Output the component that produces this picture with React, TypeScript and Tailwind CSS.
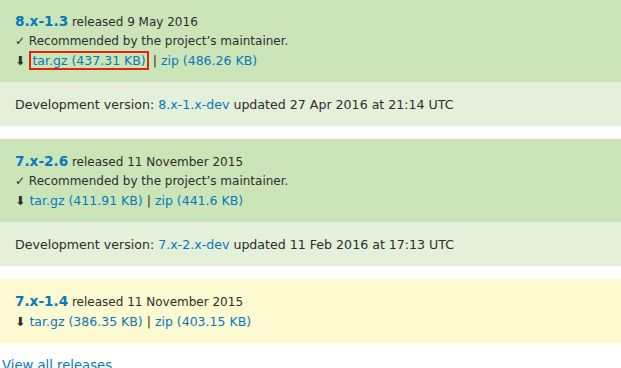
const releases = [
  {
    version: "8.x-1.3",
    date: "9 May 2016",
    recommended: true,
    tar: "437.31 KB",
    zip: "486.26 KB",
    highlight: true,
    dev: { version: "8.x-1.x-dev", updated: "27 Apr 2016 at 21:14 UTC" }
  },
  {
    version: "7.x-2.6",
    date: "11 November 2015",
    recommended: true,
    tar: "411.91 KB",
    zip: "441.6 KB",
    highlight: false,
    dev: { version: "7.x-2.x-dev", updated: "11 Feb 2016 at 17:13 UTC" }
  },
  {
    version: "7.x-1.4",
    date: "11 November 2015",
    recommended: false,
    tar: "386.35 KB",
    zip: "403.15 KB",
    highlight: false,
    dev: null
  }
];

type Release = (typeof releases)[number];

function ReleaseBlock({ release }: { release: Release }) {
  const main = release.recommended ? "bg-[#cce5b8]" : "bg-[#fdf9d1]";
  return (
    <div className="mb-[13px]">
      <div className={`${main} px-[15px] pt-[13px] pb-[12px]`}>
        <div>
          <a className="text-[13.6px] font-bold text-[#0678be]">{release.version}</a>{" "}
          released {release.date}
        </div>
        {release.recommended && <div>✓ Recommended by the project’s maintainer.</div>}
        <div className="text-[12.5px]">
          ⬇{" "}
          {release.highlight ? (
            <span className="inline-block border-2 border-[#e0260c] px-px leading-[15px]">
              <a className="text-[#0678be]">tar.gz ({release.tar})</a>
            </span>
          ) : (
            <a className="text-[#0678be]">tar.gz ({release.tar})</a>
          )}{" "}
          | <a className="text-[#0678be]">zip ({release.zip})</a>
        </div>
      </div>
      {release.dev && (
        <div className="bg-[#e4f0da] px-[15px] pt-[13px] pb-[12px] text-[12.6px]">
          Development version: <a className="text-[#0678be]">{release.dev.version}</a> updated{" "}
          {release.dev.updated}
        </div>
      )}
    </div>
  );
}

export default function App() {
  return (
    <div className="-mt-px h-[369px] overflow-hidden bg-white text-[12px] leading-[19px] text-[#2d2d2d] [font-family:'DejaVu_Sans',sans-serif]">
      {releases.map((r) => (
        <ReleaseBlock key={r.version} release={r} />
      ))}
      <a className="ml-[2px] block text-[13.2px] text-[#0678be]">View all releases</a>
    </div>
  );
}
